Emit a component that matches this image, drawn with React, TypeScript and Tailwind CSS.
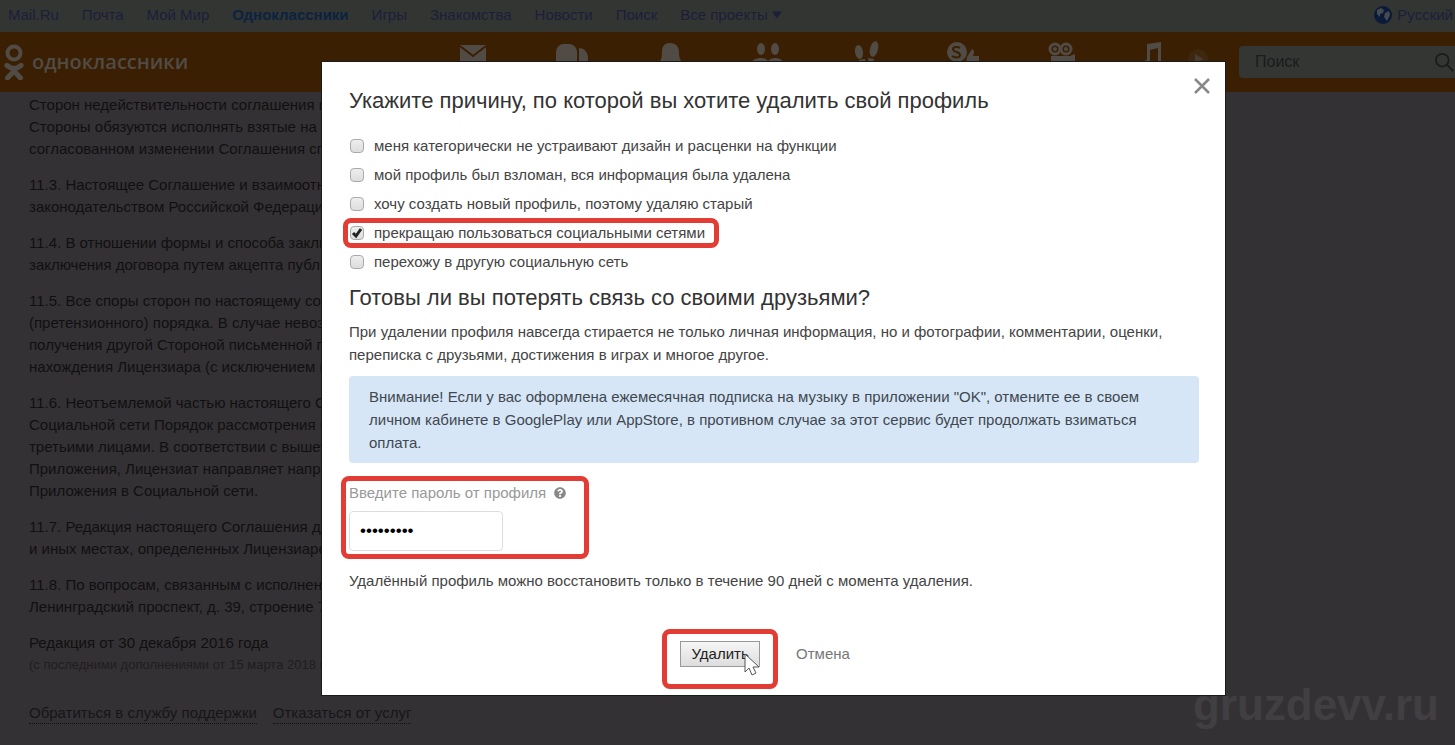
import React from 'react';
import { FaQuestionCircle } from 'react-icons/fa';

const portalLinks = ['Mail.Ru', 'Почта', 'Мой Мир', 'Одноклассники', 'Игры', 'Знакомства', 'Новости', 'Поиск'];

const agreement = [
  ['Сторон недействительности соглашения и', 'Стороны обязуются исполнять взятые на себя', 'согласованном изменении Соглашения сп'],
  ['11.3. Настоящее Соглашение и взаимоотн', 'законодательством Российской Федерации'],
  ['11.4. В отношении формы и способа заклю', 'заключения договора путем акцепта публи'],
  ['11.5. Все споры сторон по настоящему сог', '(претензионного) порядка. В случае невозм', 'получения другой Стороной письменной п', 'нахождения Лицензиара (с исключением п'],
  ['11.6. Неотъемлемой частью настоящего Со', 'Социальной сети Порядок рассмотрения п', 'третьими лицами. В соответствии с вышеу', 'Приложения, Лицензиат направляет напра', 'Приложения в Социальной сети.'],
  ['11.7. Редакция настоящего Соглашения до', 'и иных местах, определенных Лицензиаром'],
  ['11.8. По вопросам, связанным с исполнени', 'Ленинградский проспект, д. 39, строение 79'],
];

const reasons = [
  { id: 'design', label: 'меня категорически не устраивают дизайн и расценки на функции', checked: false },
  { id: 'hacked', label: 'мой профиль был взломан, вся информация была удалена', checked: false },
  { id: 'recreate', label: 'хочу создать новый профиль, поэтому удаляю старый', checked: false },
  { id: 'quit', label: 'прекращаю пользоваться социальными сетями', checked: true },
  { id: 'other', label: 'перехожу в другую социальную сеть', checked: false },
];

const toolbar = [
  {
    name: 'Сообщения',
    width: 'w-[98px]',
    icon: (
      <>
        <path d="M5 5h26v20H5z" />
        <path d="M5 6l13 10L31 6" fill="none" stroke="#3a1f02" strokeWidth="2" />
      </>
    ),
  },
  {
    name: 'Обсуждения',
    width: 'w-[98px]',
    icon: (
      <>
        <path d="M10 4h6a8 8 0 0 1 8 7v13H3V12a8 8 0 0 1 7-8z" />
        <path d="M26 8c5 0 9 4 9 10v6h-9z" />
      </>
    ),
  },
  { name: 'Оповещения', width: 'w-[98px]', icon: <path d="M19 3c6 0 9 4 9 9 0 6 1 8 4 11H8c2-3 3-5 3-11 0-5 2-9 8-9z" /> },
  {
    name: 'Друзья',
    width: 'w-[98px]',
    icon: (
      <>
        <ellipse cx="12" cy="9" rx="4" ry="6" />
        <ellipse cx="26" cy="9" rx="4" ry="6" />
        <path d="M2 24c1-4 5-6 10-6s6 2 7 3c1-1 3-3 7-3s8 2 9 6z" />
      </>
    ),
  },
  {
    name: 'Гости',
    width: 'w-[98px]',
    icon: (
      <>
        <ellipse cx="12" cy="12" rx="4" ry="7" transform="rotate(-8 12 12)" />
        <ellipse cx="27" cy="9" rx="4" ry="8" transform="rotate(14 27 9)" />
        <path d="M12 20l6-1c1 2 0 4-1 6h-4zM21 18l6 1-1 6h-4z" />
      </>
    ),
  },
  {
    name: 'События',
    width: 'w-[98px]',
    icon: (
      <>
        <circle cx="12" cy="12" r="10" />
        <path d="M15 8c-3-2-7-1-7 1 0 4 7 2 7 6 0 3-5 3-8 1" fill="none" stroke="#3a1f02" strokeWidth="2" />
        <path d="M22 17l5-8c3 1 2 5 1 7h6v9H21z" />
      </>
    ),
  },
  {
    name: 'Видео',
    width: 'w-[98px]',
    icon: (
      <>
        <circle cx="12" cy="9" r="5" fill="none" stroke="currentColor" strokeWidth="3" />
        <circle cx="23" cy="9" r="5" fill="none" stroke="currentColor" strokeWidth="3" />
        <circle cx="12" cy="9" r="2" />
        <circle cx="23" cy="9" r="2" />
        <path d="M8 16h19l5-2v11H8z" />
      </>
    ),
  },
  { name: 'Музыка', width: 'w-[84px]', icon: <path d="M13 4l14-2v20h-3V8l-8 2v13h-6c-1 0 0-3 3-3z" /> },
  {
    name: 'Плеер',
    width: 'w-2',
    icon: (
      <>
        <circle cx="18" cy="19" r="10" opacity="0.2" />
        <path d="M15 14l8 5-8 5z" opacity="0.6" />
      </>
    ),
  },
];

const highlight = 'pointer-events-none absolute rounded-lg border-5 border-[#e23c34]';

function Toolbar() {
  return (
    <header className="flex h-15 items-center bg-[#3a1f02] text-[#514b46]">
      <a href="#home" aria-label="Одноклассники" className="flex w-[424px] shrink-0 items-center gap-2 pl-1">
        <svg viewBox="0 0 20 36" className="h-9 w-5" fill="none" stroke="currentColor">
          <circle cx="10" cy="9" r="6.5" strokeWidth="4" />
          <path d="M3 21.5q7 6 14 0M3.5 34l6.5-7 6.5 7" strokeWidth="5" strokeLinecap="round" />
          <path d="M10 24v5" strokeWidth="5" />
        </svg>
        <span className="font-['Open_Sans',sans-serif] text-xl font-semibold">одноклассники</span>
      </a>
      <nav className="flex flex-1 items-start self-stretch pt-2">
        {toolbar.map((item) => (
          <a key={item.name} href="#toolbar" aria-label={item.name} className={`flex justify-center ${item.width}`}>
            <svg viewBox="0 0 36 28" className="h-7 w-9 shrink-0" fill="currentColor">{item.icon}</svg>
          </a>
        ))}
      </nav>
      <label className="flex h-8 w-54 items-center rounded-l-sm bg-[#343633] pl-4">
        <input type="search" aria-label="Поиск" placeholder="Поиск" className="min-w-0 flex-1 text-base placeholder:text-[#1a1b1c]" />
        <svg viewBox="0 0 22 22" className="h-5 w-5 text-[#1a1b1c]" fill="none" stroke="currentColor" strokeWidth="2">
          <circle cx="8" cy="9" r="7" />
          <path d="M13 14l7 7" />
        </svg>
      </label>
    </header>
  );
}

function DeleteDialog() {
  return (
    <section role="dialog" aria-modal="true" aria-labelledby="dialog-title" className="relative flex-1 border border-[#1a1a1a] bg-white pt-[25px] pr-[26px] pb-7 pl-[27px] text-[#444]">
      <button type="button" aria-label="Закрыть" className="absolute top-4 right-[15px] text-[#888]">
        <svg viewBox="0 0 16 16" className="h-4 w-4" fill="none" stroke="currentColor" strokeWidth="2.5">
          <path d="M1 1l14 14M15 1L1 15" />
        </svg>
      </button>

      <h2 id="dialog-title" className="text-[22px] leading-7 text-[#333]">Укажите причину, по которой вы хотите удалить свой профиль</h2>
      <div className="mt-4 flex flex-col items-start">
        {reasons.map((r) => (
          <label key={r.id} htmlFor={r.id} className="relative flex h-[29px] items-center gap-2.5 pl-px">
            <input
              id={r.id}
              type="checkbox"
              defaultChecked={r.checked}
              className="peer h-3.5 w-3.5 appearance-none rounded-sm border border-[#aaa] bg-linear-to-b from-[#eee] to-[#ddd]"
            />
            <svg viewBox="0 0 14 14" className="pointer-events-none absolute left-px hidden h-3.5 w-3.5 text-[#222] peer-checked:block" fill="none" stroke="currentColor" strokeWidth="3">
              <path d="M3 7l3 3 5-7" />
            </svg>
            <span>{r.label}</span>
            {r.checked && <span className={`${highlight} top-0 -right-3.5 -bottom-px -left-1.5`} />}
          </label>
        ))}
      </div>

      <h2 className="mt-2 text-[22px] leading-7 text-[#333]">Готовы ли вы потерять связь со своими друзьями?</h2>
      <p className="mt-2 leading-[23px]">При удалении профиля навсегда стирается не только личная информация, но и фотографии, комментарии, оценки, переписка с друзьями, достижения в играх и многое другое.</p>
      <p className="mt-2.5 rounded-sm bg-[#d6e6f6] px-5 py-[9px] leading-[23px] text-[#3f4850]">
        Внимание! Если у вас оформлена ежемесячная подписка на музыку в приложении "OK", отмените ее в своем личном кабинете в GooglePlay или AppStore, в противном случае за этот сервис будет продолжать взиматься оплата.
      </p>

      <div className="relative mt-[19px] w-60">
        <label htmlFor="password" className="flex items-center gap-2 text-[#999]">
          Введите пароль от профиля
          <FaQuestionCircle className="h-3 w-3 text-[#888]" />
        </label>
        <input id="password" type="password" defaultValue="qwerty123" className="mt-[7px] block h-10 w-[154px] rounded-sm border border-[#ddd] px-2.5 text-[17px] text-black" />
        <span className={`${highlight} -top-1.5 right-0 -bottom-2 -left-2`} />
      </div>

      <p className="mt-[19px]">Удалённый профиль можно восстановить только в течение 90 дней с момента удаления.</p>

      <div className="mt-[49px] flex items-center justify-center gap-9 pr-[18px]">
        <div className="relative">
          <button type="button" className="h-[26px] w-20 border border-[#999] bg-linear-to-b from-[#f6f6f6] to-[#ddd] text-[#222]">Удалить</button>
          <svg viewBox="0 0 16 24" className="absolute top-3 left-16 h-6 w-4" fill="#fff" stroke="#555" strokeWidth="1">
            <path d="M1 1v18l4-4 3 7 4-2-3-6h6z" />
          </svg>
          <span className={`${highlight} -inset-x-4.5 -top-3 -bottom-5.5`} />
        </div>
        <button type="button" className="text-[#777]">Отмена</button>
      </div>
    </section>
  );
}

export default function App() {
  return (
    <div className="relative min-h-screen overflow-hidden bg-[#343134] font-['Liberation_Sans',Arial,sans-serif] text-[15px] leading-[22px]">
      <nav className="flex h-8 items-center gap-[23px] bg-[#333533] pr-0.5 pb-0.5 pl-2 text-[#1c1e3a]">
        {portalLinks.map((link) => (
          <a key={link} href="#portal" className={link === 'Одноклассники' ? 'font-bold text-[#0b2340]' : ''}>{link}</a>
        ))}
        <button type="button" className="flex items-center gap-1">
          Все проекты
          <svg viewBox="0 0 10 7" className="h-2 w-2.5" fill="currentColor">
            <path d="M0 0h10L5 7z" />
          </svg>
        </button>
        <a href="#language" className="ml-auto flex items-center gap-1">
          <svg viewBox="0 0 20 20" className="h-5 w-5">
            <circle cx="10" cy="10" r="9" fill="#0b1a38" />
            <path d="M4 5l4-2 3 2-1 3-3 1v3L4 9zM12 8l4-2 1 4-3 6-3-4z" fill="#454a50" />
          </svg>
          Русский
        </a>
      </nav>
      <Toolbar />

      <main className="space-y-3.5 pt-0.5 pl-[29px] whitespace-nowrap text-[#101010]">
        {agreement.map((lines) => (
          <p key={lines[0]}>
            {lines.map((line) => (
              <span key={line} className="block">{line}</span>
            ))}
          </p>
        ))}
        <div>
          <p>Редакция от 30 декабря 2016 года</p>
          <p className="text-[13px] text-[#1f1d1f]">(с последними дополнениями от 15 марта 2018 г.)</p>
        </div>
      </main>
      <footer className="flex gap-4 pt-[27px] pl-[29px] text-[#161616]">
        <a href="#support" className="border-b border-dotted border-[#111] leading-5">Обратиться в службу поддержки</a>
        <a href="#refuse" className="border-b border-dotted border-[#111] leading-5">Отказаться от услуг</a>
      </footer>

      <p className="absolute right-4 bottom-4 text-[44px] leading-12 font-bold text-[#413f42]">gruzdevv.ru</p>

      <div className="absolute inset-x-0 top-0 flex pt-[61px] pr-[229px] pl-[321px]">
        <DeleteDialog />
      </div>
    </div>
  );
}
